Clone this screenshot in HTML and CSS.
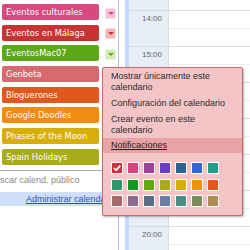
FILE: index.html
```html
<!DOCTYPE html>
<html>
<head>
<meta name="viewport" content="width=device-width, initial-scale=1">
<link rel="stylesheet" href="styles.css">
</head>
<body>

<div class="page">
  <div class="sidebar">
    <ul class="cal-list">
      <li><span class="cal-name pink">Eventos culturales</span><span class="cal-btn pink-btn"></span></li>
      <li><span class="cal-name red">Eventos en Málaga</span><span class="cal-btn red-btn"></span></li>
      <li><span class="cal-name green">EventosMac07</span><span class="cal-btn green-btn"></span></li>
      <li><span class="cal-name salmon">Genbeta</span></li>
      <li><span class="cal-name orange">Bloguerones</span></li>
      <li><span class="cal-name amber">Google Doodles</span></li>
      <li><span class="cal-name gold">Phases of the Moon</span></li>
      <li><span class="cal-name olive">Spain Holidays</span></li>
    </ul>
    <div class="search">Buscar calend. público</div>
    <div class="manage"><a href="#">Administrar calendarios</a></div>
  </div>

  <div class="calendar">
    <div class="times">
      <div class="time">14:00</div>
      <div class="time">15:00</div>
      <div class="time">16:00</div>
      <div class="time">17:00</div>
      <div class="time">18:00</div>
      <div class="time">19:00</div>
      <div class="time">20:00</div>
    </div>
    <div class="grid">
      <div class="slot"></div>
      <div class="slot"></div>
      <div class="slot"></div>
      <div class="slot"></div>
      <div class="slot"></div>
      <div class="slot"></div>
      <div class="slot"></div>
    </div>
  </div>
</div>

<!-- calendar options menu, opened over the list -->
<div class="menu">
  <div class="menu-item">Mostrar únicamente este calendario</div>
  <div class="menu-item">Configuración del calendario</div>
  <div class="menu-item">Crear evento en este calendario</div>
  <div class="menu-item active">Notificaciones</div>
  <div class="swatches">
    <span class="sw checked" style="background:#c8343a"><svg width="10" height="10" viewBox="0 0 10 10"><path d="M2 5.2 L4.2 7.3 L8.2 2.6" fill="none" stroke="#fff" stroke-width="1.8"/></svg></span>
    <span class="sw" style="background:#d6437a"></span>
    <span class="sw" style="background:#9b459a"></span>
    <span class="sw" style="background:#6a3cc8"></span>
    <span class="sw" style="background:#2c6496"></span>
    <span class="sw" style="background:#3366d6"></span>
    <span class="sw" style="background:#22a08a"></span>
    <span class="sw" style="background:#2c9a66"></span>
    <span class="sw" style="background:#129624"></span>
    <span class="sw" style="background:#66a812"></span>
    <span class="sw" style="background:#a8ac1c"></span>
    <span class="sw" style="background:#d6ae0a"></span>
    <span class="sw" style="background:#f0900c"></span>
    <span class="sw" style="background:#e05a1a"></span>
    <span class="sw" style="background:#a56a6a"></span>
    <span class="sw" style="background:#8a6a8e"></span>
    <span class="sw" style="background:#5c6c84"></span>
    <span class="sw" style="background:#6c7ea6"></span>
    <span class="sw" style="background:#4e8c8a"></span>
    <span class="sw" style="background:#7a8c58"></span>
    <span class="sw" style="background:#b28c52"></span>
  </div>
</div>

</body>
</html>
```

FILE: styles.css
```css
* {
  box-sizing: border-box;
}

body {
  margin: 0;
  width: 250px;
  height: 250px;
  overflow: hidden;
  position: relative;
  background: #fff;
  font-family: "Liberation Sans", Arial, sans-serif;
}

.page {
  display: flex;
  height: 250px;
}

/* Left column with the calendar list */
.sidebar {
  width: 119px;
  flex-shrink: 0;
  border-right: 1px solid #b4c0d4;
  white-space: nowrap;
  overflow: hidden;
}

.cal-list {
  margin: 0;
  padding: 4px 0 0 2px;
  list-style: none;
}

.cal-list li {
  display: flex;
  align-items: center;
  height: 16px;
  margin-bottom: 4.7px;
}

.cal-name {
  width: 97px;
  height: 16px;
  padding-left: 4px;
  border-radius: 2px;
  color: #fff;
  font-family: "DejaVu Sans", Verdana, sans-serif;
  font-size: 8.3px;
  line-height: 16px;
}

.pink { background: #d9497f; }
.red { background: #c83434; }
.green { background: #5ea818; }
.salmon { background: #d66a6e; }
.orange { background: #e0581c; }
.amber { background: #f08c10; }
.gold { background: #d8ae0a; }
.olive { background: #a8ac1c; }

/* Small dropdown button next to each calendar */
.cal-btn {
  width: 11px;
  height: 11px;
  margin: 2px 0 0 6px;
  border-radius: 2px;
  border: 1px solid #fff;
  display: flex;
  align-items: center;
  justify-content: center;
}

.cal-btn::after {
  content: "";
  border-style: solid;
  border-width: 3px 3px 0 3px;
  border-color: currentColor transparent transparent transparent;
}

.pink-btn { background: #f4c2d4; color: #d9497f; border-color: #f8dbe6; }
.red-btn { background: #f2b8b8; color: #c83434; border-color: #f8d6d6; }
.green-btn { background: #d4eab8; color: #5ea818; border-color: #e6f2d6; }

.search {
  margin-top: 1px;
  border-top: 1px solid #a8a8a8;
  padding: 4px 0 6px;
  margin-left: -11px;
  color: #888;
  font-size: 9px;
  line-height: 11px;
}

.manage {
  height: 14px;
  background: #cddff9;
  padding-left: 26px;
  font-size: 9px;
  line-height: 14px;
}

.manage a {
  color: #2f4fc4;
}

/* Day view */
.calendar {
  flex: 1;
  display: flex;
  margin-left: 6px;
  border-left: 4px solid #c3d9ff;
}

.times {
  width: 40px;
  flex-shrink: 0;
  background: #e8eef7;
  border-right: 1px solid #d8dee8;
  padding-top: 10px;
}

.time {
  height: 36px;
  border-top: 1px solid #d4dbe6;
  padding: 3px 6px 0 0;
  text-align: right;
  color: #666;
  font-size: 8px;
  line-height: 10px;
}

.grid {
  flex: 1;
  padding-top: 10px;
}

.slot {
  height: 36px;
  border-top: 1px solid #dedede;
  background: linear-gradient(#eeeeee, #eeeeee) 0 17px / 100% 1px no-repeat;
}

/* Popup menu */
.menu {
  position: absolute;
  left: 102px;
  top: 67px;
  width: 141px;
  height: 149px;
  background: #f4c5c6;
  border: 1px solid #c86a6c;
  border-radius: 2px;
  box-shadow: 1px 1px 2px rgba(0, 0, 0, 0.3);
  color: #2a2a2a;
  font-size: 9px;
  line-height: 11px;
}

.menu-item {
  padding: 2.5px 8px;
}

.menu-item.active {
  background: #e9a3a5;
  padding: 2px 8px;
  text-decoration: underline;
  color: #222;
}

.swatches {
  display: grid;
  grid-template-columns: repeat(7, 12px);
  column-gap: 4px;
  row-gap: 4.5px;
  padding: 9px 8px 0;
}

.sw {
  width: 12px;
  height: 12px;
  border: 1px solid #fff;
  display: flex;
  align-items: center;
  justify-content: center;
}
```
